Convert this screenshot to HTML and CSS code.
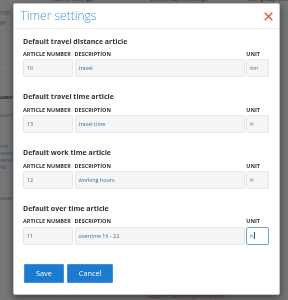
FILE: index.html
```html
<!DOCTYPE html>
<html lang="en">
<head>
<meta charset="utf-8">
<title>Timer settings</title>
<link rel="stylesheet" href="styles.css">
</head>
<body>
<div class="page">
  <aside class="side">
    <a class="side-link s1">Timer settings</a>
    <a class="side-link s2">Mail settings</a>
    <hr class="side-rule">
    <p class="side-head">Planner users</p>
    <a class="side-link s4">Administrator (admin)</a>
    <div class="side-card">
      <a class="side-link">Katarina Lind</a>
      <a class="side-link">Servicepersonal</a>
      <a class="side-link">katarina@service.se</a>
      <a class="side-link">katarina.lind</a>
    </div>
    <div class="side-card s6">
      <a class="side-link">Katarina (katarina)</a>
      <a class="side-link">lovel.com</a>
    </div>
  </aside>
  <main class="main">
    <nav class="tabs">
      <span class="tab t1">Planner settings</span>
      <span class="tab t2">Service object settings</span>
      <span class="tab t3">User group settings</span>
    </nav>
    <p class="note">Support: support@example.se</p>
  </main>
</div>
<div class="backdrop"></div>
<div class="modal" role="dialog" aria-labelledby="dlg-title">
  <header class="modal-header">
    <h1 class="modal-title" id="dlg-title">Timer settings</h1>
    <button class="close" aria-label="Close"><svg viewBox="0 0 9 9"><path d="M0.7 0.7L8.3 8.3M8.3 0.7L0.7 8.3"/></svg></button>
  </header>
  <div class="modal-body">
    <section class="article">
      <h2 class="article-title">Default travel distance article</h2>
      <div class="fields">
        <span class="lbl">Article number</span>
        <span class="lbl">Description</span>
        <span class="lbl">Unit</span>
        <div class="input">16</div>
        <div class="input">travel</div>
        <div class="input">km</div>
      </div>
    </section>
    <section class="article">
      <h2 class="article-title">Default travel time article</h2>
      <div class="fields">
        <span class="lbl">Article number</span>
        <span class="lbl">Description</span>
        <span class="lbl">Unit</span>
        <div class="input">13</div>
        <div class="input">travel time</div>
        <div class="input">h</div>
      </div>
    </section>
    <section class="article">
      <h2 class="article-title">Default work time article</h2>
      <div class="fields">
        <span class="lbl">Article number</span>
        <span class="lbl">Description</span>
        <span class="lbl">Unit</span>
        <div class="input">12</div>
        <div class="input">working hours</div>
        <div class="input">h</div>
      </div>
    </section>
    <section class="article">
      <h2 class="article-title">Default over time article</h2>
      <div class="fields">
        <span class="lbl">Article number</span>
        <span class="lbl">Description</span>
        <span class="lbl">Unit</span>
        <div class="input">11</div>
        <div class="input">overtime 16 - 22</div>
        <div class="input focus">h<span class="caret"></span></div>
      </div>
    </section>
  </div>
  <footer class="modal-footer">
    <button class="btn">Save</button>
    <button class="btn">Cancel</button>
  </footer>
</div>
</body>
</html>
```

FILE: styles.css
```css
* { box-sizing: border-box; }
html, body { margin: 0; padding: 0; }
body {
  width: 288px;
  height: 300px;
  overflow: hidden;
  position: relative;
  background: #eeeeee;
  font-family: "Open Sans", "Liberation Sans", sans-serif;
}

/* page behind the dialog */
.page { display: flex; margin-left: -56px; }
.side {
  width: 69px;
  flex: none;
  padding: 9px 0 0 30px;
  font-size: 5.5px;
  line-height: 7px;
  white-space: nowrap;
  overflow: hidden;
}
.side-link { display: block; color: #6c9fd8; }
.s2 { margin-top: 3px; }
.side-rule { margin: 42px 0 0 -30px; border: 0; border-top: 1px solid #ffffff; }
.side-head { margin: 25px 0 0; font-weight: 700; font-size: 6px; color: #555; }
.s4 { margin-top: 11px; }
.side-card { margin-top: 24px; }
.s6 { margin-top: 24px; }
.main { flex: 1; }
.tabs { display: flex; margin-top: -5px; font-size: 5.5px; line-height: 8px; color: #556; white-space: nowrap; }
.t1 { margin-left: 38px; }
.t2 { margin-left: 58px; }
.t3 { margin-left: 40px; }
.note { margin: 289px 0 0 134px; font-size: 5.5px; line-height: 8px; color: #d06060; white-space: nowrap; }

.backdrop { position: fixed; inset: 0; background: rgba(0, 0, 0, 0.5); }

/* dialog */
.modal {
  position: absolute;
  left: 13px;
  top: 3px;
  width: 267px;
  background: #fff;
  border: 1px solid #c4c4c4;
  border-radius: 2px;
  box-shadow: 0 3px 9px rgba(0, 0, 0, 0.5);
}
.modal-header {
  display: flex;
  align-items: center;
  justify-content: space-between;
  padding: 4px 6px 4px 6.5px;
  border-bottom: 1px solid #ececec;
}
.modal-title {
  margin: 0;
  font-size: 12px;
  line-height: 16px;
  font-weight: 300;
  color: #3d94dc;
}
.close {
  width: 9px;
  height: 9px;
  padding: 0;
  border: 0;
  background: none;
  display: block;
}
.close svg { display: block; width: 9px; height: 9px; fill: none; stroke: #e8553f; stroke-width: 1.4; }

.modal-body { padding: 7.6px 10px 0 9px; }
.article + .article { margin-top: 15.1px; }
.article-title {
  margin: 0 0 4.5px;
  font-size: 7px;
  line-height: 10px;
  font-weight: 700;
  color: #333;
}
.fields {
  display: grid;
  grid-template-columns: 50px 1fr 22.7px;
  column-gap: 1.5px;
  row-gap: 1.2px;
}
.lbl {
  font-size: 5.5px;
  line-height: 7px;
  font-weight: 700;
  text-transform: uppercase;
  color: #333;
  white-space: nowrap;
}
.input {
  height: 18px;
  display: flex;
  align-items: center;
  padding: 0 3px;
  border: 1px solid #e6e6e6;
  border-radius: 2px;
  background: #f5f5f5;
  font-size: 5.4px;
  color: #3c6ea6;
  white-space: nowrap;
}
.input.focus { background: #fff; border-color: #6aa3db; }
.caret { display: inline-block; width: 0.8px; height: 7px; margin-left: 0.6px; background: #2a4d7a; }

.modal-footer {
  display: flex;
  gap: 3px;
  padding: 19.3px 10px 11.8px 10px;
}
.btn {
  height: 18.7px;
  padding: 0 11px;
  border: 1px solid #3f90dc;
  border-radius: 1px;
  background: #1c7bd0;
  color: #fff;
  font-family: "Open Sans", "Liberation Sans", sans-serif;
  font-size: 7.3px;
  font-weight: 400;
  line-height: 1;
}
```
